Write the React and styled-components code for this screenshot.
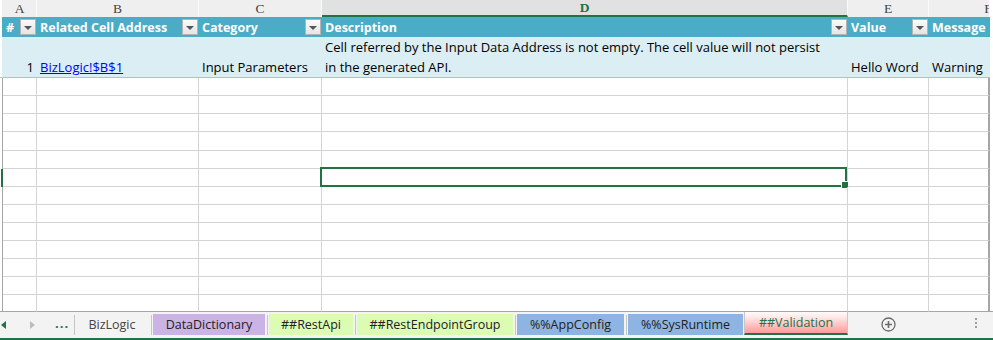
import React from 'react'
import styled, { createGlobalStyle, css } from 'styled-components'

const GREEN = '#217346'
const GRID = '#d4d4d4'
const EDGE = '#a6a6a6'
const TEAL = '#4bacc6'
const ROWBLUE = '#daeef3'

const COLS = '3px 34px 162px 123px 526px 81px 61px 3px'

const GlobalStyle = createGlobalStyle`
  html, body { margin: 0; padding: 0; background: #fff; }
  body { font-family: "Open Sans", "Liberation Sans", sans-serif; }
  * { box-sizing: border-box; }
`

const Sheet = styled.div`
  width: 993px;
  height: 340px;
  display: flex;
  flex-direction: column;
  overflow: hidden;
  background: #fff;
`

const Grid = styled.div`
  display: flex;
  flex-direction: column;
`

const Row = styled.div`
  display: grid;
  grid-template-columns: ${COLS};
  height: ${p => p.$h}px;
`

const Gutter = styled.div`
  border-right: ${p => (p.$mark ? `2px solid ${GREEN}` : `1px solid ${p.$line || EDGE}`)};
  border-bottom: ${p => (p.$bottom ? `1px solid ${p.$bottom}` : 'none')};
`

const ColHead = styled.div`
  display: flex;
  justify-content: ${p => (p.$clip ? 'flex-start' : 'center')};
  align-items: center;
  overflow: hidden;
  background: ${p => (p.$active ? '#e1e1e1' : '#efefef')};
  border-right: 1px solid #fafafa;
  border-bottom: ${p => (p.$active ? `2px solid ${GREEN}` : 'none')};
  font-family: "Liberation Serif", "DejaVu Serif", serif;
  font-size: 13.5px;
  color: ${p => (p.$active ? GREEN : '#444')};
  font-weight: ${p => (p.$active ? 700 : 400)};
  padding-top: ${p => (p.$active ? '1px' : '0')};
`

const Letter = styled.span`
  flex: 0 0 ${p => p.$w || 'auto'};
  text-align: center;
`

const HeadCell = styled.div`
  display: flex;
  align-items: center;
  justify-content: space-between;
  background: ${TEAL};
  color: #fff;
  font-weight: 700;
  font-size: 12.5px;
  padding: 0 1px 0 3px;
  white-space: nowrap;
  overflow: hidden;
`

const FilterButton = styled.span`
  flex: 0 0 16px;
  height: 16px;
  display: flex;
  align-items: center;
  justify-content: center;
  background: linear-gradient(#fbfbfb, #e4e4e4);
  border: 1px solid #b4b4b4;
  margin-left: 4px;
  &::after {
    content: '';
    border-left: 4px solid transparent;
    border-right: 4px solid transparent;
    border-top: 4px solid #555;
    margin-top: 1px;
  }
`

const DataCell = styled.div`
  display: flex;
  align-items: flex-end;
  justify-content: ${p => (p.$right ? 'flex-end' : 'flex-start')};
  background: ${ROWBLUE};
  border-bottom: 1px solid #92cddc;
  font-size: 13px;
  line-height: 20px;
  color: #000;
  padding: 0 3px 0 3px;
  white-space: nowrap;
  overflow: hidden;
`

const Link = styled.a`
  color: #0000ff;
  text-decoration: underline;
`

const Cell = styled.div`
  position: relative;
  border-right: ${p => (p.$edge ? `2px solid ${EDGE}` : `1px solid ${GRID}`)};
  border-bottom: 1px solid ${p => (p.$last ? EDGE : GRID)};
`

const Blank = styled.div`
  border-bottom: 1px solid ${p => (p.$last ? EDGE : 'transparent')};
`

const Selection = styled.div`
  position: absolute;
  top: -2px;
  left: -2px;
  right: 0;
  bottom: -1px;
  border: 2px solid ${GREEN};
  pointer-events: none;
`

const FillHandle = styled.span`
  position: absolute;
  right: -3px;
  bottom: -3px;
  width: 6px;
  height: 6px;
  background: ${GREEN};
  box-shadow: 0 0 0 1px #fff;
`

const TabBar = styled.div`
  display: flex;
  align-items: flex-start;
  height: 28px;
  padding-top: 2px;
  background: #f3f3f3;
  border-bottom: 2px solid ${GREEN};
`

const Nav = styled.div`
  flex: 0 0 74px;
  height: 21px;
  display: flex;
  align-items: center;
  padding-left: 1px;
`

const Arrow = styled.span`
  width: 0;
  height: 0;
  border-top: 4px solid transparent;
  border-bottom: 4px solid transparent;
  ${p => (p.$dir === 'left'
    ? css`border-right: 5px solid ${GREEN};`
    : css`border-left: 5px solid #bdbdbd; margin-left: 24px;`)}
`

const More = styled.span`
  margin-left: 20px;
  color: ${GREEN};
  font-weight: 700;
  font-size: 13px;
  letter-spacing: 1px;
  line-height: 1;
  padding-bottom: 3px;
`

const Divider = styled.span`
  flex: 0 0 ${p => p.$w || 4}px;
  height: 21px;
  display: flex;
  justify-content: center;
  &::after {
    content: '';
    width: 1px;
    margin-top: 1px;
    height: 20px;
    background: #c6c6c6;
  }
`

const TABS = {
  plain: { bg: '#f3f3f3', color: '#444' },
  purple: { bg: '#ccb3e6', color: '#222' },
  green: { bg: '#dcfcb4', color: '#222' },
  blue: { bg: '#8db4e2', color: '#222' },
}

const Tab = styled.div`
  flex: 0 0 ${p => p.$w}px;
  height: 21px;
  display: flex;
  align-items: center;
  justify-content: center;
  font-size: 12.5px;
  white-space: nowrap;
  background: ${p => TABS[p.$tone].bg};
  color: ${p => TABS[p.$tone].color};
`

const ActiveTab = styled.div`
  flex: 0 0 ${p => p.$w}px;
  height: 24px;
  margin: -3px 0 0 1px;
  display: flex;
  align-items: center;
  justify-content: center;
  font-size: 12.5px;
  color: ${GREEN};
  background: linear-gradient(#ffffff, #ffe6e6 30%, #ff9a9a);
  border-left: 1px solid #c6c6c6;
  border-right: 1px solid #c6c6c6;
  border-bottom: 2px solid ${GREEN};
  padding-top: 1px;
`

const AddButton = styled.span`
  margin: 3px 0 0 33px;
  width: 15px;
  height: 15px;
  display: flex;
`

const Spacer = styled.span`
  flex: 1;
`

const Dots = styled.span`
  margin: 4px 16px 0 0;
  display: flex;
  flex-direction: column;
  gap: 2px;
  & > i {
    width: 2px;
    height: 2px;
    background: #9e9e9e;
  }
`

const Lines = styled.span`
  display: flex;
  flex-direction: column;
`

const letters = [
  { l: 'A' },
  { l: 'B' },
  { l: 'C' },
  { l: 'D', active: true },
  { l: 'E' },
  { l: 'F', w: '118px', clip: true },
]

const headers = ['#', 'Related Cell Address', 'Category', 'Description', 'Value', 'Message']

const rowHeights = [18, 18, 18, 19, 18, 18, 18, 18, 18, 18, 18, 18, 17]
const SELECTED_ROW = 5

const sheets = [
  { name: 'DataDictionary', tone: 'purple', w: 112 },
  { name: '##RestApi', tone: 'green', w: 84 },
  { name: '##RestEndpointGroup', tone: 'green', w: 156 },
  { name: '%%AppConfig', tone: 'blue', w: 107 },
  { name: '%%SysRuntime', tone: 'blue', w: 115 },
]

const App = () => {
  return (
    <Sheet>
      <GlobalStyle />
      <Grid>
        <Row $h={17}>
          <Gutter $line="#efefef" />
          {letters.map(c => (
            <ColHead key={c.l} $active={c.active} $clip={c.clip}>
              <Letter $w={c.w}>{c.l}</Letter>
            </ColHead>
          ))}
          <div />
        </Row>

        <Row $h={20}>
          <Gutter $line={TEAL} />
          {headers.map((h, i) => (
            <HeadCell key={h}>
              <span>{h}</span>
              {i < 5 && <FilterButton />}
            </HeadCell>
          ))}
          <div />
        </Row>

        <Row $h={41}>
          <Gutter $line={ROWBLUE} $bottom="#92cddc" />
          <DataCell $right>1</DataCell>
          <DataCell><Link href="#">BizLogic!$B$1</Link></DataCell>
          <DataCell>Input Parameters</DataCell>
          <DataCell>
            <Lines>
              <span>Cell referred by the Input Data Address is not empty. The cell value will not persist</span>
              <span>in the generated API.</span>
            </Lines>
          </DataCell>
          <DataCell>Hello Word</DataCell>
          <DataCell>Warning</DataCell>
          <div />
        </Row>

        {rowHeights.map((h, r) => {
          const last = r === rowHeights.length - 1
          return (
            <Row key={r} $h={h}>
              <Gutter $mark={r === SELECTED_ROW} $bottom={last ? EDGE : null} />
              {[0, 1, 2, 3, 4, 5].map(c => (
                <Cell key={c} $edge={c === 5} $last={last}>
                  {r === SELECTED_ROW && c === 3 && (
                    <Selection>
                      <FillHandle />
                    </Selection>
                  )}
                </Cell>
              ))}
              <Blank $last={last} />
            </Row>
          )
        })}
      </Grid>

      <TabBar>
        <Nav>
          <Arrow $dir="left" />
          <Arrow $dir="right" />
          <More>...</More>
        </Nav>
        <Divider $w={1} />
        <Tab $tone="plain" $w={74}>BizLogic</Tab>
        {sheets.map(s => (
          <React.Fragment key={s.name}>
            <Divider />
            <Tab $tone={s.tone} $w={s.w}>{s.name}</Tab>
          </React.Fragment>
        ))}
        <ActiveTab $w={104}>##Validation</ActiveTab>
        <AddButton>
          <svg width="15" height="15" viewBox="0 0 15 15">
            <circle cx="7.5" cy="7.5" r="6.5" fill="none" stroke="#6b6b6b" strokeWidth="1.3" />
            <path d="M7.5 4v7M4 7.5h7" stroke="#6b6b6b" strokeWidth="1.6" />
          </svg>
        </AddButton>
        <Spacer />
        <Dots><i /><i /><i /></Dots>
      </TabBar>
    </Sheet>
  )
}

export default App
